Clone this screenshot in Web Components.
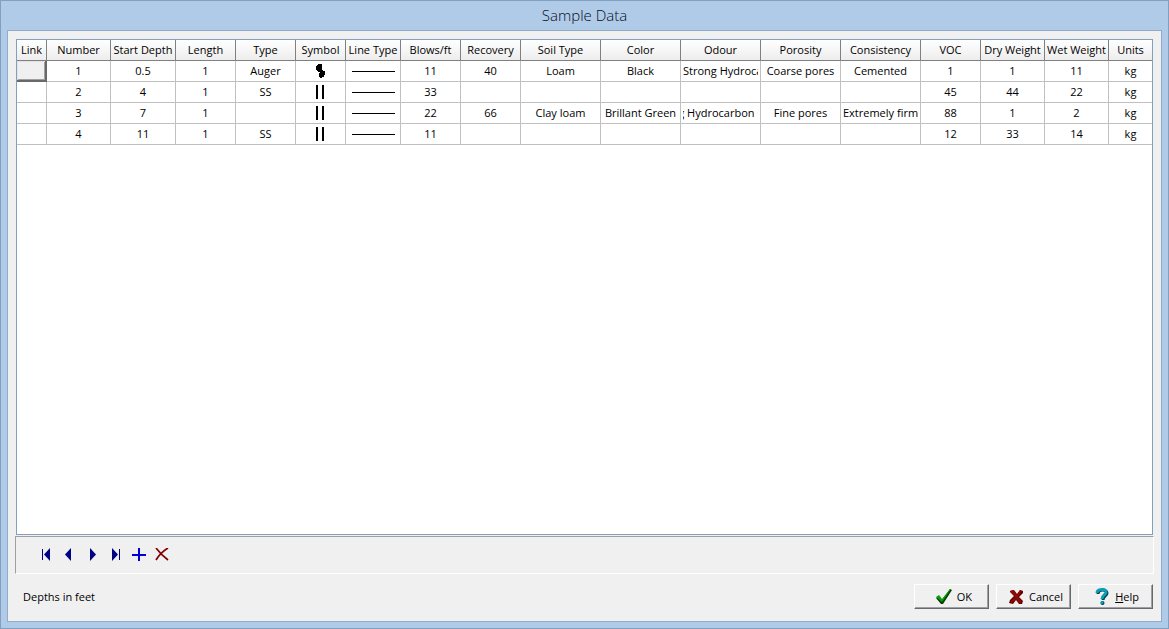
<!DOCTYPE html>
<html lang="en">
<head>
<meta charset="utf-8">
<title>Sample Data</title>
<style>
  html, body { height: 100%; }
  body { margin: 0; font: 11px/14px "Open Sans", "Noto Sans", sans-serif; color: #000; }
</style>
</head>
<body>
<dialog-window heading="Sample Data">
  <sample-grid></sample-grid>
  <record-navigator></record-navigator>
  <dialog-footer>
    <span>Depths in feet</span>
    <dialog-button slot="actions" icon="ok">OK</dialog-button>
    <dialog-button slot="actions" icon="cancel">Cancel</dialog-button>
    <dialog-button slot="actions" icon="help"><u>H</u>elp</dialog-button>
  </dialog-footer>
</dialog-window>

<script>
class DialogWindow extends HTMLElement {
  constructor() {
    super();
    this.attachShadow({ mode: 'open' }).innerHTML = `
      <style>
        :host { display: flex; flex-direction: column; box-sizing: border-box; min-height: 100%; height: 100%;
          padding: 0 6px 6px; background: #b0cbe8; border: 1px solid #839fc0; }
        h1 { margin: 0; height: 29px; font: 300 15px/29px "Open Sans", "Noto Sans", sans-serif; color: #000c1c; text-align: center; }
        main { flex: 1; min-height: 0; display: flex; flex-direction: column; padding: 8px 7px 12px;
          background: #f0f0f0; border: 1px solid #8faccb; }
      </style>
      <h1></h1>
      <main><slot></slot></main>`;
  }
  connectedCallback() {
    this.shadowRoot.querySelector('h1').textContent = this.getAttribute('heading');
  }
}

const COLUMNS = [
  ['Link', 30], ['Number', 64], ['Start Depth', 65], ['Length', 60], ['Type', 60], ['Symbol', 50],
  ['Line Type', 55], ['Blows/ft', 60], ['Recovery', 60], ['Soil Type', 80], ['Color', 80], ['Odour', 80],
  ['Porosity', 80], ['Consistency', 80], ['VOC', 60], ['Dry Weight', 64], ['Wet Weight', 64], ['Units', 0]
];
const ROWS = [
  ['', '1', '0.5', '1', 'Auger', '@auger', '@line', '11', '40', 'Loam', 'Black', '<Strong Hydrocarbon', 'Coarse pores', 'Cemented', '1', '1', '11', 'kg'],
  ['', '2', '4', '1', 'SS', '@spoon', '@line', '33', '', '', '', '', '', '', '45', '44', '22', 'kg'],
  ['', '3', '7', '1', '', '@spoon', '@line', '22', '66', 'Clay loam', 'Brillant Green', 'Strong Hydrocarbon Odour', 'Fine pores', 'Extremely firm', '88', '1', '2', 'kg'],
  ['', '4', '11', '1', 'SS', '@spoon', '@line', '11', '', '', '', '', '', '', '12', '33', '14', 'kg']
];
const MARKS = {
  '@auger': '<svg width="10" height="16" shape-rendering="crispEdges"><path d="M2 1h4v6h1v1h2v4H8v2H6v1H4v-1H3v-4h1V9H2V8H1V7H0V3h1V2h1z"/></svg>',
  '@spoon': '<svg width="10" height="16" shape-rendering="crispEdges"><path d="M0 1h2v14H0zM6 1h2v14H6z"/></svg>',
  '@line': '<svg width="43" height="3" shape-rendering="crispEdges"><path d="M0 1h43v1H0z"/></svg>'
};

class SampleGrid extends HTMLElement {
  constructor() {
    super();
    const cell = (v) => {
      if (v[0] === '@') return `<td><div>${MARKS[v]}</div></td>`;
      if (v[0] === '<') return `<td><div class="start">${v.slice(1)}</div></td>`;
      return `<td><div>${v}</div></td>`;
    };
    this.attachShadow({ mode: 'open' }).innerHTML = `
      <style>
        :host { display: block; flex: 1; min-height: 160px; margin: 0 1px; overflow: auto; background: #fff; border: 1px solid #839fc0; }
        table { width: 100%; min-width: 1135px; table-layout: fixed; border-collapse: separate; border-spacing: 0; }
        th, td { box-sizing: border-box; height: 21px; padding: 0; font-weight: normal; text-align: center; white-space: nowrap;
          border: 0 solid #c0c0c0; border-width: 0 1px 1px 0; }
        th { background: linear-gradient(#fff, #ededed); border-color: #808080; }
        th:last-child, td:last-child { border-right: 0; }
        div { display: flex; justify-content: center; align-items: center; height: 20px; margin: 0 2px; overflow: hidden; }
        .start { justify-content: flex-start; }
        svg { flex: none; }
        tbody tr:first-child td:first-child { background: #f0f0f0; border: 1px solid #696969; border-width: 0 2px 2px 0;
          box-shadow: inset 1px 1px #e3e3e3, inset -1px -1px #a0a0a0; }
        tbody tr:first-child td:first-child div { height: 19px; }
      </style>
      <table>
        <colgroup>${COLUMNS.map(c => c[1] ? `<col style="width:${c[1]}px">` : '<col>').join('')}</colgroup>
        <thead><tr>${COLUMNS.map(c => `<th scope="col">${c[0]}</th>`).join('')}</tr></thead>
        <tbody>${ROWS.map(r => `<tr>${r.map(cell).join('')}</tr>`).join('')}</tbody>
      </table>`;
  }
}

class RecordNavigator extends HTMLElement {
  constructor() {
    super();
    const item = (label, art) => `<button type="button" aria-label="${label}"><svg width="15" height="15" viewBox="0 0 15 15">${art}</svg></button>`;
    this.attachShadow({ mode: 'open' }).innerHTML = `
      <style>
        :host { display: flex; align-items: center; box-sizing: border-box; height: 38px; margin-top: 1px; padding: 0 19px;
          border: 1px solid; border-color: #a0a0a0 #fff #fff #a0a0a0; }
        button { display: flex; align-items: center; justify-content: center; width: 23px; height: 24px; padding: 0; border: 0; background: none; }
        svg { fill: #000084; }
      </style>
      ${item('First record', '<path d="M3 1h1v11H3zM11 0v13L5 6.500z"/>')}
      ${item('Previous record', '<path d="M9 0v13L3 6.500z"/>')}
      ${item('Next record', '<path d="M5 0v13L11 6.500z"/>')}
      ${item('Last record', '<path d="M4 0v13L10 6.500zM11 1h1v11h-1z"/>')}
      ${item('Insert record', '<path fill="#0000d6" d="M7 0h2v6h6v2H9v5H7V8H1V6h6z"/>')}
      ${item('Delete record', '<path fill="none" stroke="#800000" stroke-width="1.700" d="M2 0c3 4 7 8 12 12M14 0C9 3 5 7 2 12"/>')}`;
  }
}

class DialogFooter extends HTMLElement {
  constructor() {
    super();
    this.attachShadow({ mode: 'open' }).innerHTML = `
      <style>
        :host { display: flex; justify-content: space-between; align-items: center; margin: 10px 0 0; padding: 0 1px 0 8px; }
        div { display: flex; gap: 7px; }
      </style>
      <slot></slot>
      <div><slot name="actions"></slot></div>`;
  }
}

const GLYPHS = {
  ok: '<path fill="#063c06" d="M1 10l3-2 3 4 8-11 2 1L8 16H6z"/><path fill="#08a008" d="M1 9l3-2 3 4 8-10h1L7 14z"/>',
  cancel: '<path fill="#5c0000" d="M3 3l4-1 3 4 3-4 3 1v2l-4 4 4 4-1 3h-3l-3-4-3 4-4-1 1-3 4-4-4-4z"/><path fill="#920808" d="M3 3l3-1 4 5 3-5 2 1-4 6 4 5-1 1h-2l-3-4-4 4-2-1 5-5z"/>',
  help: '<path fill="none" stroke="#043c50" stroke-width="3" d="M5 6c0-5 9-5 9-1 0 3-4 3-4 7"/><path fill="none" stroke="#08a0b4" stroke-width="3" d="M4 5c0-4 9-5 9-1 0 3-4 3-4 7"/><circle cx="9.500" cy="15" r="2" fill="#043c50"/><circle cx="9" cy="14.500" r="1.500" fill="#08a0b4"/>'
};

class DialogButton extends HTMLElement {
  constructor() {
    super();
    this.attachShadow({ mode: 'open' }).innerHTML = `
      <style>
        :host { display: block; }
        button { display: flex; align-items: center; justify-content: flex-end; gap: 4px; box-sizing: border-box;
          min-width: 75px; height: 25px; padding: 0 7px; font: inherit; color: inherit; background: #f0f0f0;
          border: 1px solid; border-color: #fff #696969 #696969 #fff; box-shadow: inset -1px -1px #a0a0a0; }
        :host([icon="ok"]) button { padding-right: 16px; }
        :host([icon="help"]) button { padding-right: 13px; }
      </style>
      <button type="button"><svg width="18" height="18" viewBox="0 0 18 18" aria-hidden="true"></svg><span><slot></slot></span></button>`;
  }
  connectedCallback() {
    this.shadowRoot.querySelector('svg').innerHTML = GLYPHS[this.getAttribute('icon')];
  }
}

customElements.define('dialog-window', DialogWindow);
customElements.define('sample-grid', SampleGrid);
customElements.define('record-navigator', RecordNavigator);
customElements.define('dialog-footer', DialogFooter);
customElements.define('dialog-button', DialogButton);
</script>
</body>
</html>
